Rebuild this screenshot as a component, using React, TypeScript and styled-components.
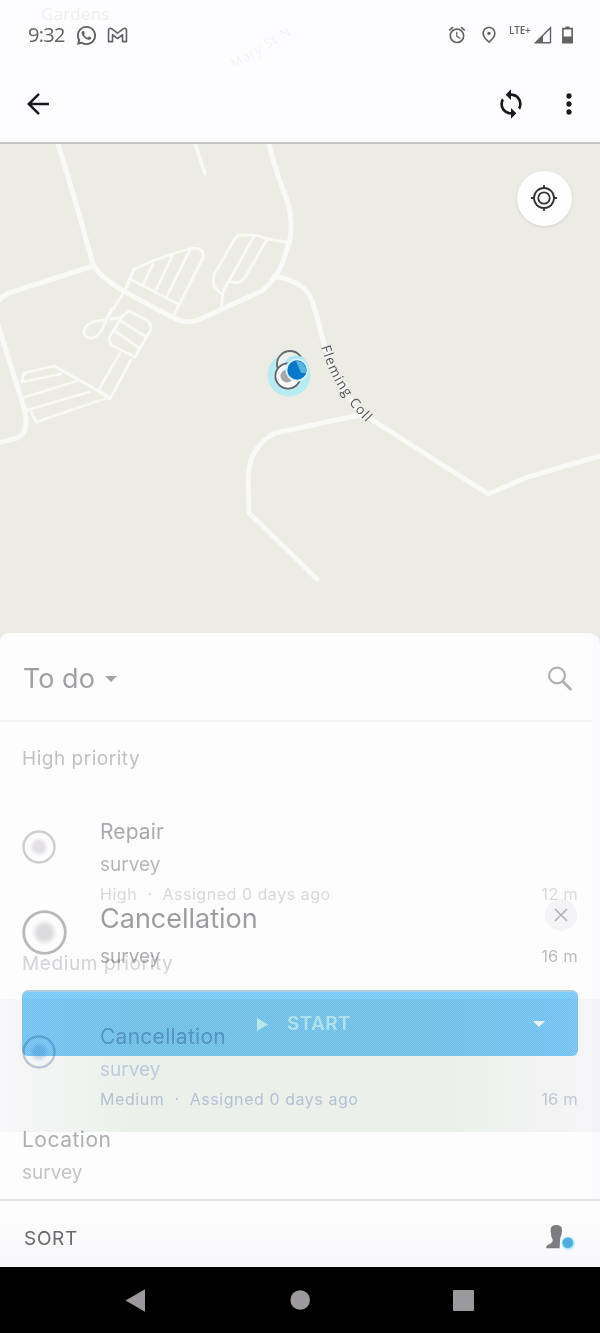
import React from "react";
import styled, { createGlobalStyle } from "styled-components";
import { MdAccessAlarm, MdMoreVert, MdOutlinePlace, MdSync } from "react-icons/md";
import { RiWhatsappLine } from "react-icons/ri";

const GlobalStyle = createGlobalStyle`
  body { margin: 0; background: #fdfcfe; }
  * { box-sizing: border-box; }
  svg { display: block; flex: none; }
`;

const Screen = styled.div`
  position: relative;
  width: 600px;
  height: 1333px;
  display: flex;
  flex-direction: column;
  overflow: hidden;
  background: #fdfcfe;
  font-family: "Inter", "Liberation Sans", sans-serif;
`;

const Label = styled.span<{ $size: number; $line: number; $color: string; $spacing?: number; $weight?: number }>`
  display: block;
  white-space: pre;
  font-size: ${(p) => p.$size}px;
  line-height: ${(p) => p.$line}px;
  color: ${(p) => p.$color};
  letter-spacing: ${(p) => p.$spacing ?? 0}px;
  font-weight: ${(p) => p.$weight ?? 400};
`;

const TopBar = styled.header`
  height: 144px;
  flex: none;
  border-bottom: 2px solid #c3c2c8;
`;

const StatusBar = styled.div`
  height: 70px;
  padding: 0 26px 0 28px;
  display: flex;
  align-items: center;
  justify-content: space-between;
  color: #626165;
`;

const StatusGroup = styled.div<{ $gap: number }>`
  display: flex;
  align-items: center;
  gap: ${(p) => p.$gap}px;
`;

const Clock = styled.span`
  font: 400 20px/28px "Open Sans", sans-serif;
  letter-spacing: -0.7px;
  width: 38px;
`;

const Network = styled.span`
  font: 600 10px/10px "Open Sans", sans-serif;
  margin: -11px 3px 0 10px;
  width: 22px;
  letter-spacing: -0.2px;
`;

const Spacer = styled.span<{ $w: number }>`
  width: ${(p) => p.$w}px;
`;

const Toolbar = styled.div`
  height: 68px;
  padding: 0 15px 0 26px;
  display: flex;
  align-items: center;
  color: #19191b;
`;

const ToolbarActions = styled.div`
  margin-left: auto;
  display: flex;
  align-items: center;
  gap: 26px;
`;

const GhostLabels = styled.svg`
  position: absolute;
  left: 0;
  top: 0;
`;

const MapArea = styled.section`
  position: relative;
  height: 489px;
  flex: none;
  background: #ecece4;
`;

const LocateButton = styled.button`
  position: absolute;
  right: 28px;
  top: 27px;
  width: 55px;
  height: 55px;
  padding: 0 1px 1px 0;
  border: 0;
  border-radius: 50%;
  background: #fefefe;
  box-shadow: 0 1px 3px rgba(90, 90, 100, 0.18);
  display: grid;
  place-items: center;
`;

const SheetWrap = styled.div`
  background: #e9e9e2;
  flex: none;
`;

const Sheet = styled.section`
  height: 566px;
  border-radius: 9px 12px 0 0;
  background: linear-gradient(90deg, #fefdfe 592px, #faf9fc 593px);
  box-shadow: 0 -1px 2px #f4f5ec;
`;

const SheetHeader = styled.div`
  height: 89px;
  width: 592px;
  padding: 4px 19px 0 23px;
  display: flex;
  align-items: center;
  border-bottom: 2px solid #f1f1f4;
`;

const SheetSearch = styled.div`
  margin-left: auto;
  color: #b0afb3;
`;

const Caret = styled.i<{ $color: string; $w: number; $h: number; $left?: number }>`
  width: 0;
  height: 0;
  margin-left: ${(p) => p.$left ?? 0}px;
  border: ${(p) => p.$w}px solid transparent;
  border-bottom: 0;
  border-top: ${(p) => p.$h}px solid ${(p) => p.$color};
`;

const Layers = styled.div`
  display: grid;
  height: 477px;
  > * {
    grid-area: 1 / 1;
  }
`;

const ListLayer = styled.div`
  mix-blend-mode: multiply;
`;

const SectionTitle = styled.div`
  height: 72px;
  padding: 21px 22px 0;
`;

const Task = styled.article<{ $tinted?: boolean }>`
  height: 133px;
  padding: 22px 22px 0;
  display: grid;
  grid-template-columns: 78px 1fr auto;
  background: ${(p) =>
    p.$tinted
      ? "linear-gradient(90deg, #f9f9fb 0, #f4f6f5 40px, #ecf3eb 130px, #ecf3eb 450px, #f4f5f5 560px, #f8f8fa 600px)"
      : "transparent"};
`;

const TaskMarker = styled.div`
  padding-top: 14px;
`;

const TaskDistance = styled.div`
  padding-top: 64px;
`;

const CardLayer = styled.div`
  padding: 176px 22px 0;
`;

const CardTop = styled.div`
  display: grid;
  grid-template-columns: 78px 1fr auto;
  height: 92px;
`;

const CardMarker = styled.div`
  padding-top: 12px;
`;

const CardText = styled.div`
  padding-top: 1px;
`;

const CardSide = styled.div`
  display: flex;
  flex-direction: column;
  align-items: flex-end;
`;

const CloseButton = styled.div`
  width: 32px;
  height: 32px;
  margin: 1px 1px 8px 0;
  border-radius: 50%;
  background: #f4f3f5;
  display: grid;
  place-items: center;
`;

const StartButton = styled.div`
  height: 66px;
  border-radius: 6px;
  display: flex;
  align-items: center;
  padding: 0 33px 0 235px;
  background: repeating-conic-gradient(#62c7ff 0 25%, #9cd2f8 0 50%) 0 0 / 2px 2px;
  border-top: 2px solid #b0cbdc;
`;

const StartLabel = styled.div`
  margin: 0 auto 0 19px;
`;

const LocationBlock = styled.div`
  padding-top: 67px;
`;

const Footer = styled.footer`
  height: 68px;
  flex: none;
  border-top: 2px solid #e3e2e5;
  background: linear-gradient(#fdfcfd, #f8f8fa);
  padding: 10px 24px 0;
  display: flex;
  justify-content: space-between;
`;

const NavBar = styled.nav`
  height: 66px;
  flex: none;
  background: #000;
  display: flex;
  align-items: center;
  justify-content: space-between;
  padding: 0 126px 0 125px;
`;

const Target = ({ size, ring, dot, width }: { size: number; ring: string; dot: string; width: number }) => {
  const id = `dot-${size}-${dot.slice(1)}`;
  return (
    <svg width={size} height={size} viewBox={`0 0 ${size} ${size}`}>
      <defs>
        <radialGradient id={id}>
          <stop offset="0.5" stopColor={dot} />
          <stop offset="1" stopColor={dot} stopOpacity="0" />
        </radialGradient>
      </defs>
      <circle cx={size / 2} cy={size / 2} r={size / 2 - width / 2 - 0.3} fill="none" stroke={ring} strokeWidth={width} />
      <circle cx={size / 2} cy={size / 2} r={size * 0.29} fill={`url(#${id})`} />
    </svg>
  );
};

const RoadMap = () => (
  <svg width="600" height="489" viewBox="0 144 600 489">
    <g fill="none" stroke="#f9f9f5" strokeLinejoin="round" strokeLinecap="round">
      <g strokeWidth="5">
        <path d="M57 140 L77 207 L93 264 Q100 277 125 292 L172 317 Q187 325 200 319 L262 291 Q276 279 283 262 L290 240 Q293 218 287 200 Q275 170 268 140" />
        <path d="M-3 304 Q2 294 15 291 L93 266" />
        <path d="M-2 325 L25 411 Q29 433 17 438 L-3 443" />
        <path d="M274 276 Q300 281 308 293 Q314 302 322 337 Q334 381 360 412 L488 494 L528 477 L603 455" />
        <path d="M360 415 L275 433 Q248 447 248 480 L249 513 L317 579" />
        <path d="M194 140 L205 174" strokeWidth="3.5" />
      </g>
      <g strokeWidth="2.8">
        <path d="M125 292 L134 269 Q160 257 189 249 Q205 246 203 258 L174 315" />
        <path d="M130 279 L178 304 M143 285 L153 264 M156 290 L172 256 M167 296 L190 250" />
        <path d="M134 269 L124 292 L106 320 Q83 321 84 334 Q92 344 102 330 L111 309" />
        <path d="M111 319 L120 318 L129 311 L147 320 Q154 327 149 333 L135 357 L111 345 L109 338 L123 315 M119 320 L145 336 M115 331 L139 348" />
        <path d="M120 353 L98 391 L110 399 L131 360" />
        <path d="M22 382 L24 373 L54 366 L77 379 L110 397 L36 422 L31 412 M22 382 L61 374 M22 398 L77 381 M24 411 L89 392" />
        <path d="M222 307 Q221 291 229 281 Q240 286 246 276 L267 239 L287 242 M222 294 Q209 285 215 273 L234 240 Q237 235 243 235 Q257 234 267 239 M254 236 L229 281" />
      </g>
    </g>
    <circle cx="289" cy="375" r="21.5" fill="#b5ebf1" />
    <circle cx="290" cy="364" r="13" fill="#eef0ec" stroke="#626b70" strokeWidth="1.8" />
    <circle cx="296" cy="368" r="12.5" fill="#a9e7f3" />
    <circle cx="288" cy="376" r="12.6" fill="#fbf9fb" stroke="#5f6368" strokeWidth="1.8" />
    <circle cx="287" cy="376" r="6.5" fill="#a8a6a9" />
    <circle cx="297" cy="370" r="10.6" fill="#0a78c8" stroke="#d9f2fa" strokeWidth="1.8" />
    <path d="M296 361 A9.6 9.6 0 0 1 306 373 L301 373 Z" fill="#57b3e0" />
    <path id="road-label" d="M321 347 Q334 392 370 426" fill="none" />
    <text fontFamily="Open Sans, sans-serif" fontSize="13.5" fill="#55565a" letterSpacing="1.15">
      <textPath href="#road-label">Fleming Coll</textPath>
    </text>
  </svg>
);

export default function App() {
  return (
    <>
      <GlobalStyle />
      <Screen>
        <GhostLabels width="330" height="80">
          <text x="41" y="20" fontFamily="Open Sans, sans-serif" fontSize="17" letterSpacing="0.2" fill="#efedf0">
            Gardens
          </text>
          <text transform="translate(234 69) rotate(-31)" fontFamily="Open Sans, sans-serif" fontSize="13" letterSpacing="1" fill="#f3f2f5">
            Mary St  N
          </text>
        </GhostLabels>
        <TopBar>
          <StatusBar>
            <StatusGroup $gap={9}>
              <Clock>9:32</Clock>
              <RiWhatsappLine size={23} />
              <svg width="21" height="17" viewBox="0 0 22 18" fill="none" stroke="currentColor" strokeWidth="1.7" strokeLinejoin="round">
                <path d="M1.5 2.8 Q3 0.4 5 2 L11 6.6 L17 2 Q19 0.4 20.5 2.8 V15.5 H16.3 V8.2 L11 12.2 L5.7 8.2 V15.5 H1.5 Z" />
              </svg>
            </StatusGroup>
            <StatusGroup $gap={0}>
              <MdAccessAlarm size={20} />
              <Spacer $w={12} />
              <MdOutlinePlace size={20} />
              <Network>LTE+</Network>
              <svg width="18" height="18" viewBox="0 0 18 18">
                <path d="M1.5 16.7 L16.5 1.8 V16.7 Z" fill="none" stroke="currentColor" strokeWidth="1.4" />
                <path d="M1 17 L9 9 V17 Z" fill="currentColor" />
              </svg>
              <Spacer $w={9} />
              <svg width="13" height="18" viewBox="0 0 13 18">
                <path d="M1.9 2.6 H11.1 V16.6 H1.9 Z M4.5 1.2 H8.5" fill="none" stroke="currentColor" strokeWidth="1.6" />
                <path d="M1.5 10.5 H11.5 V17 H1.5 Z" fill="currentColor" />
              </svg>
            </StatusGroup>
          </StatusBar>
          <Toolbar>
            <svg width="24" height="24" viewBox="0 0 24 24" fill="none" stroke="currentColor" strokeWidth="2.5">
              <path d="M2.5 12 H23 M13 1.8 L2.8 12 L13 22.2" />
            </svg>
            <ToolbarActions>
              <MdSync size={32} />
              <MdMoreVert size={32} />
            </ToolbarActions>
          </Toolbar>
        </TopBar>
        <MapArea>
          <RoadMap />
          <LocateButton>
            <svg width="28" height="28" viewBox="0 0 28 28" fill="none" stroke="#333337" strokeWidth="1.8">
              <circle cx="14" cy="14" r="10" />
              <circle cx="14" cy="14" r="5.7" />
              <path d="M14 1 V5 M14 23 V27 M1 14 H5 M23 14 H27" />
            </svg>
          </LocateButton>
        </MapArea>
        <SheetWrap>
          <Sheet>
            <SheetHeader>
              <Label $size={27} $line={36} $color="#a09fa3">To do</Label>
              <Caret $color="#a3a2a6" $w={6.5} $h={6.5} $left={10} />
              <SheetSearch>
                <svg width="26" height="26" viewBox="0 0 26 26" fill="none" stroke="currentColor">
                  <circle cx="10" cy="9.5" r="7.9" strokeWidth="2.2" />
                  <path d="M15.8 15.5 L24.3 24" strokeWidth="2.8" />
                </svg>
              </SheetSearch>
            </SheetHeader>
            <Layers>
              <CardLayer>
                <CardTop>
                  <CardMarker>
                    <Target size={45} ring="#b8b7b9" dot="#dbdadc" width={2.8} />
                  </CardMarker>
                  <CardText>
                    <Label $size={27} $line={40} $color="#9d9ca0">Cancellation</Label>
                    <Label $size={19} $line={36} $color="#aeadb1">survey</Label>
                  </CardText>
                  <CardSide>
                    <CloseButton>
                      <svg width="14" height="14" viewBox="0 0 14 14" stroke="#b4b3b7" strokeWidth="1.7">
                        <path d="M1 1 L13 13 M13 1 L1 13" />
                      </svg>
                    </CloseButton>
                    <Label $size={16.5} $line={34} $color="#bbbabe" $spacing={0.2}>16 m</Label>
                  </CardSide>
                </CardTop>
                <StartButton>
                  <svg width="11" height="13" viewBox="0 0 11 13">
                    <path d="M0 0 L11 6.5 L0 13 Z" fill="#ccf4ff" />
                  </svg>
                  <StartLabel>
                    <Label $size={19} $line={30} $color="#bfecff" $weight={600} $spacing={0.4}>START</Label>
                  </StartLabel>
                  <Caret $color="#f6fffc" $w={6.5} $h={6} />
                </StartButton>
                <LocationBlock>
                  <Label $size={21} $line={33} $color="#acaeb3" $spacing={0.5}>Location</Label>
                  <Label $size={19} $line={34} $color="#c3c2c6">survey</Label>
                </LocationBlock>
              </CardLayer>
              <ListLayer>
                <SectionTitle>
                  <Label $size={19} $line={32} $color="#c3c2c6" $spacing={0.52}>High priority</Label>
                </SectionTitle>
                <Task>
                  <TaskMarker>
                    <Target size={34} ring="#cfcecf" dot="#e3e2e4" width={2.4} />
                  </TaskMarker>
                  <div>
                    <Label $size={21} $line={32} $color="#acabaf" $spacing={0.1}>Repair</Label>
                    <Label $size={19} $line={34} $color="#b8b7bb">survey</Label>
                    <Label $size={16} $line={25} $color="#dad9dc" $spacing={0.53}>High  ·  Assigned 0 days ago</Label>
                  </div>
                  <TaskDistance>
                    <Label $size={16.5} $line={29} $color="#dddcdf" $spacing={0.2}>12 m</Label>
                  </TaskDistance>
                </Task>
                <SectionTitle>
                  <Label $size={19} $line={32} $color="#d5d4d8" $spacing={0.62}>Medium priority</Label>
                </SectionTitle>
                <Task $tinted>
                  <TaskMarker>
                    <Target size={34} ring="#b9cad8" dot="#c9dae8" width={2.4} />
                  </TaskMarker>
                  <div>
                    <Label $size={21} $line={32} $color="#a6b8c2" $spacing={0.27}>Cancellation</Label>
                    <Label $size={19} $line={34} $color="#bccddd">survey</Label>
                    <Label $size={16} $line={25} $color="#b5c3d4" $spacing={0.56}>Medium  ·  Assigned 0 days ago</Label>
                  </div>
                  <TaskDistance>
                    <Label $size={16.5} $line={29} $color="#c0c9d3" $spacing={0.2}>16 m</Label>
                  </TaskDistance>
                </Task>
              </ListLayer>
            </Layers>
          </Sheet>
        </SheetWrap>
        <Footer>
          <Label $size={19} $line={56} $color="#69686c" $spacing={0.7}>SORT</Label>
          <svg width="32" height="56" viewBox="0 0 32 56">
            <path d="M6.6 19 Q6.6 14 12.2 14 Q18 14 18 19 Q18 24 16.2 27 L15.6 37.2 H2 Q2 34.5 5 33.3 Q8.6 32 8.8 29 Q6.6 25 6.6 19 Z" fill="#7d7c80" />
            <circle cx="24.3" cy="32.3" r="6.8" fill="#b4ebf8" />
            <circle cx="23.8" cy="31.7" r="5.3" fill="#4eacdf" />
          </svg>
        </Footer>
        <NavBar>
          <svg width="21" height="23" viewBox="0 0 21 23">
            <path d="M0.5 11.5 L20 0.3 V22.7 Z" fill="#9b999d" />
          </svg>
          <svg width="20" height="20" viewBox="0 0 20 20">
            <circle cx="10.2" cy="10" r="9.8" fill="#9b999d" />
          </svg>
          <svg width="21" height="21" viewBox="0 0 21 21">
            <rect width="21" height="21" rx="1" fill="#9b999d" />
          </svg>
        </NavBar>
      </Screen>
    </>
  );
}
